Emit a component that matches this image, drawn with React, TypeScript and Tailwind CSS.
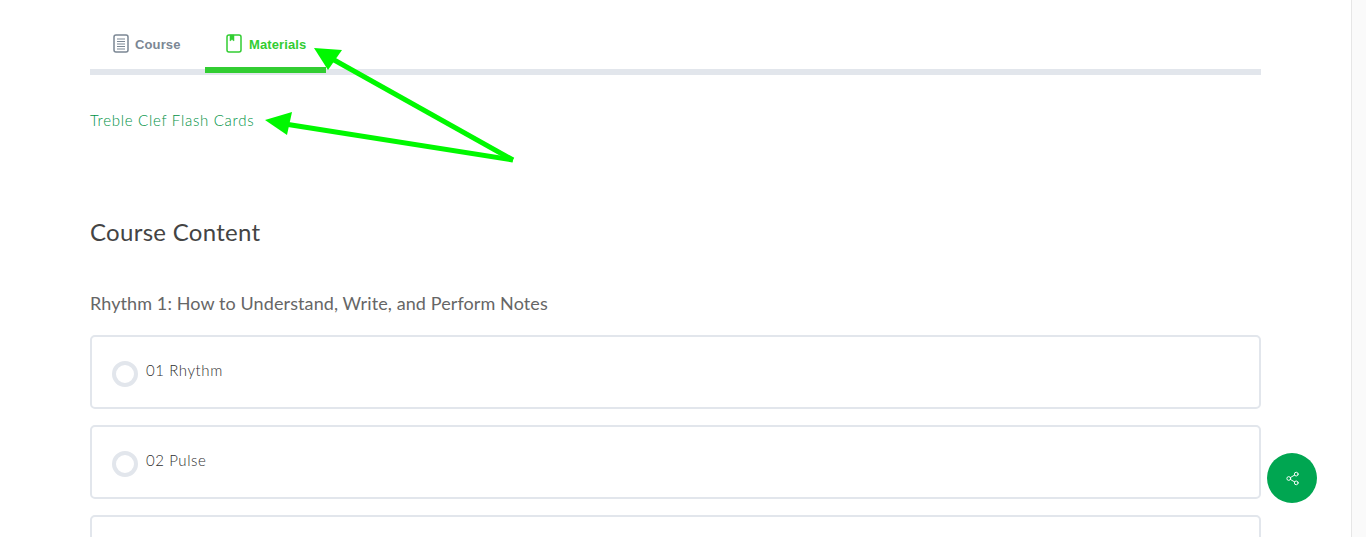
import { Share2 } from 'lucide-react'

const lessons = ['01 Rhythm', '02 Pulse', '']

function CourseIcon() {
  return (
    <svg width="16" height="19" viewBox="0 0 16 19" fill="none" stroke="#7b8794">
      <rect x="1" y="1" width="14" height="17" rx="2" strokeWidth="1.5" />
      <path d="M4 5h8M4 7.5h8M4 10h8M4 12.5h8M4 15h8" strokeWidth="1" />
    </svg>
  )
}

function MaterialsIcon() {
  return (
    <svg width="16" height="19" viewBox="0 0 16 19" fill="none" stroke="#32cd32">
      <rect x="1" y="1" width="14" height="17" rx="2" strokeWidth="1.5" />
      <path d="M4 1h4v6L6 5.5 4 7z" fill="#32cd32" strokeWidth="0.5" />
    </svg>
  )
}

function Arrows() {
  return (
    <svg className="absolute left-0 top-0" width="1366" height="537" fill="#00f800" stroke="none">
      <path d="M513 160 L327 56" stroke="#00f800" strokeWidth="5" />
      <path d="M314 48 L342 50 L328 70 Z" />
      <path d="M513 160 L285 124" stroke="#00f800" strokeWidth="5" />
      <path d="M265 120 L292 112 L287 135 Z" />
    </svg>
  )
}

export default function App() {
  return (
    <div className="relative flex h-[537px] overflow-hidden bg-white font-['Lato',sans-serif]">
      <main className="min-w-0 flex-1 px-[90px]">
        <div className="h-[75px] border-b-[6px] border-[#e2e6ec] pt-[25px]">
          <div className="flex font-['Liberation_Sans',sans-serif] text-[13px] font-bold tracking-[0.12px]">
            <div className="flex h-[48px] w-[115px] items-start gap-[6px] pl-[23px] pt-[9px] text-[#7b8794]">
              <CourseIcon />
              <span className="mt-[1px]">Course</span>
            </div>
            <div className="flex h-[48px] w-[121px] items-start gap-[7px] border-b-[6px] border-[#32cd32] pl-[21px] pt-[9px] text-[#32cd32]">
              <MaterialsIcon />
              <span className="mt-[1px]">Materials</span>
            </div>
          </div>
        </div>

        <a className="mt-[34px] block text-[15px] font-light leading-[22px] tracking-[0.72px] text-[#009245]">
          Treble Clef Flash Cards
        </a>

        <h2 className="mt-[85px] text-[24px] leading-[32px] tracking-[0.3px] text-[#444]">Course Content</h2>

        <h3 className="mt-[42px] text-[18px] leading-[26px] tracking-[0.1px] text-[#666]">
          Rhythm 1: How to Understand, Write, and Perform Notes
        </h3>

        <div className="mt-[19px] flex flex-col gap-[16px]">
          {lessons.map((title, i) => (
            <div key={i} className="flex h-[74px] shrink-0 items-start rounded-[5px] border-2 border-[#e2e6ec] pl-[20px]">
              <span className="mt-[24px] size-[26px] rounded-full border-4 border-[#e2e6ec]" />
              <span className="mt-[22px] ml-[8px] text-[15px] font-light leading-[22px] tracking-[0.58px] text-[#2f2f2f]">{title}</span>
            </div>
          ))}
        </div>
      </main>

      <aside className="w-[15px] shrink-0 border-l border-[#e6e6e6] bg-[#fafafa]" />

      <button className="absolute left-[1267px] top-[453px] flex size-[50px] items-center justify-center rounded-full bg-[#00a651] text-white">
        <Share2 size={15} strokeWidth={1.5} />
      </button>

      <Arrows />
    </div>
  )
}
